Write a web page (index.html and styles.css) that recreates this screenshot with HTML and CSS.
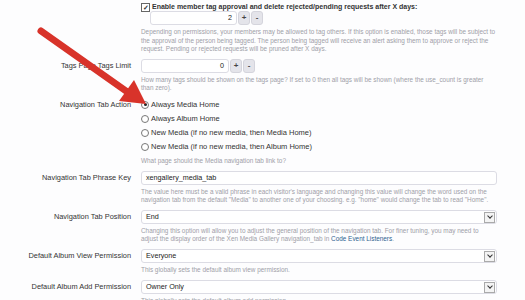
FILE: index.html
```html
<!DOCTYPE html>
<html lang="en">
<head>
    <meta charset="UTF-8">
    <meta name="viewport" content="width=device-width, initial-scale=1.0">
    <title>Xen Media Gallery Options</title>
    <link rel="stylesheet" href="styles.css">
</head>
<body>
    <form class="options">
        <div class="row first">
            <div class="label"></div>
            <div class="control">
                <label class="check"><span class="box">&#10003;</span> Enable member tag approval and delete rejected/pending requests after X days:</label>
                <div class="spin indent">
                    <span class="field num">2</span>
                    <span class="btn">+</span>
                    <span class="btn">-</span>
                </div>
                <p class="hint">Depending on permissions, your members may be allowed to tag others. If this option is enabled, those tags will be subject to the approval of the person being tagged. The person being tagged will receive an alert asking them to approve or reject the request. Pending or rejected requests will be pruned after X days.</p>
            </div>
        </div>

        <div class="row">
            <div class="label">Tags Page Tags Limit</div>
            <div class="control">
                <div class="spin">
                    <span class="field num short">0</span>
                    <span class="btn">+</span>
                    <span class="btn">-</span>
                </div>
                <p class="hint">How many tags should be shown on the tags page? If set to 0 then all tags will be shown (where the use_count is greater than zero).</p>
            </div>
        </div>

        <div class="row radios">
            <div class="label">Navigation Tab Action</div>
            <div class="control">
                <label class="radio"><span class="dot on"></span>Always Media Home</label>
                <label class="radio"><span class="dot"></span>Always Album Home</label>
                <label class="radio"><span class="dot"></span>New Media (if no new media, then Media Home)</label>
                <label class="radio"><span class="dot"></span>New Media (if no new media, then Album Home)</label>
                <p class="hint">What page should the Media navigation tab link to?</p>
            </div>
        </div>

        <div class="row">
            <div class="label">Navigation Tab Phrase Key</div>
            <div class="control">
                <div class="field text">xengallery_media_tab</div>
                <p class="hint">The value here must be a valid phrase in each visitor's language and changing this value will change the word used on the navigation tab from the default "Media" to another one of your choosing. e.g. "home" would change the tab to read "Home".</p>
            </div>
        </div>

        <div class="row">
            <div class="label">Navigation Tab Position</div>
            <div class="control">
                <div class="field select">End<span class="arrow"></span></div>
                <p class="hint">Changing this option will allow you to adjust the general position of the navigation tab. For finer tuning, you may need to adjust the display order of the Xen Media Gallery navigation_tab in <a href="#">Code Event Listeners</a>.</p>
            </div>
        </div>

        <div class="row">
            <div class="label">Default Album View Permission</div>
            <div class="control">
                <div class="field select">Everyone<span class="arrow"></span></div>
                <p class="hint">This globally sets the default album view permission.</p>
            </div>
        </div>

        <div class="row">
            <div class="label">Default Album Add Permission</div>
            <div class="control">
                <div class="field select">Owner Only<span class="arrow"></span></div>
                <p class="hint">This globally sets the default album add permission.</p>
            </div>
        </div>
    </form>

    <!-- red pointer drawn over the form -->
    <svg class="pointer" width="525" height="300" viewBox="0 0 525 300">
        <line x1="41" y1="31" x2="126" y2="91" stroke="#d8332a" stroke-width="7" stroke-linecap="round"/>
        <polygon points="146,104 119,101 134,80" fill="#d8332a"/>
    </svg>
</body>
</html>
```

FILE: styles.css
```css
body {
    margin: 0;
    background-color: #fdfdfe;
    font-family: "Liberation Sans", Arial, sans-serif;
    color: #222;
    position: relative;
    height: 300px;
    overflow: hidden;
}
.options {
    padding-top: 2px;
    padding-right: 28px;
}
.row {
    display: grid;
    grid-template-columns: 131px 1fr;
    column-gap: 10px;
    margin-bottom: 5px;
}
.label {
    text-align: right;
    font-size: 7.4px;
    line-height: 14px;
    color: #333;
}
.check {
    display: flex;
    align-items: center;
    gap: 2px;
    font-size: 7px;
    font-weight: bold;
    line-height: 10px;
    color: #333;
}
.box {
    width: 7px;
    height: 7px;
    border: 1px solid #666;
    background: #fff;
    font-size: 7px;
    line-height: 7px;
    text-align: center;
    color: #333;
}
.spin {
    display: flex;
    align-items: center;
    gap: 1px;
}
.indent {
    margin-left: 9px;
    margin-top: -1px;
}
.field {
    box-sizing: border-box;
    height: 14px;
    border: 1px solid #dcdce4;
    border-radius: 3px;
    background: #fff;
    font-size: 7.2px;
    line-height: 12px;
    padding: 0 4px;
    color: #222;
}
.num {
    width: 87px;
    text-align: right;
}
.short {
    width: 88px;
}
.btn {
    width: 10px;
    height: 12px;
    border-radius: 3px;
    background: #e4e4ea;
    border: 1px solid #d4d4dc;
    font-size: 8px;
    line-height: 11px;
    text-align: center;
    color: #444;
    font-weight: bold;
}
.select {
    position: relative;
}
.arrow {
    position: absolute;
    right: 1px;
    top: 1px;
    width: 9px;
    height: 9px;
    border: 1px solid #aaa;
    background: #f4f4f4;
}
.arrow::after {
    content: "";
    position: absolute;
    left: 2.5px;
    top: 1px;
    width: 3px;
    height: 3px;
    border-right: 1.3px solid #333;
    border-bottom: 1.3px solid #333;
    transform: rotate(45deg);
}
.radio {
    display: flex;
    align-items: center;
    gap: 2px;
    height: 14px;
    font-size: 7.5px;
    color: #333;
}
.dot {
    box-sizing: border-box;
    width: 8px;
    height: 8px;
    border: 1px solid #777;
    border-radius: 50%;
    background: #fff;
    position: relative;
}
.dot.on::after {
    content: "";
    position: absolute;
    left: 1.5px;
    top: 1.5px;
    width: 3px;
    height: 3px;
    border-radius: 50%;
    background: #222;
}
.hint {
    margin: 3px 0 0;
    font-size: 6.4px;
    line-height: 8.6px;
    color: #a0a0a8;
}
.hint a {
    color: #2f6390;
    text-decoration: none;
}
.pointer {
    position: absolute;
    left: 0;
    top: 0;
    pointer-events: none;
}
```
